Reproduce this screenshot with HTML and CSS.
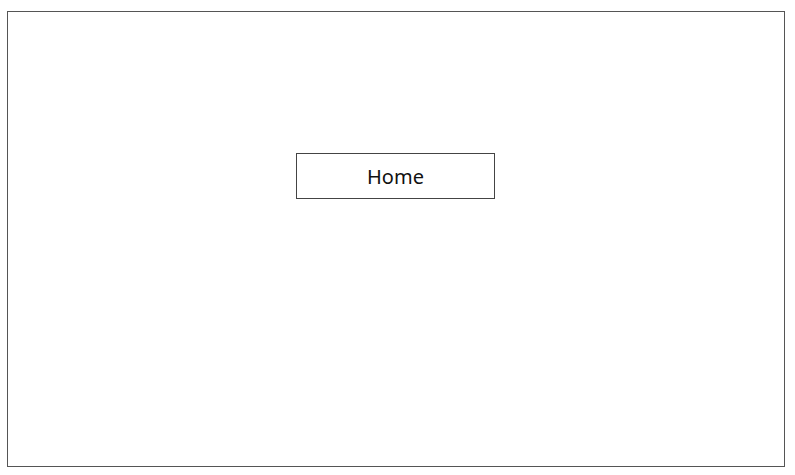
FILE: index.html
```html
<!DOCTYPE html>
<html lang="en">
<head>
  <meta charset="UTF-8" />
  <meta name="viewport" content="width=device-width, initial-scale=1.0" />
  <title>Home</title>
  <link rel="stylesheet" href="styles.css">
</head>
<body>
  <div class="screen">
    <button class="home-btn">Home</button>
  </div>
</body>
</html>
```

FILE: styles.css
```css
* {
  box-sizing: border-box;
}
body {
  margin: 0;
  padding: 11px 0 0 7px;
  font-family: "Noto Sans", "Open Sans", sans-serif;
  background: #fff;
}
.screen {
  width: 778px;
  height: 456px;
  border: 1px solid #555;
  display: flex;
  flex-direction: column;
  align-items: center;
  padding: 141px 1px 0 0;
}
.home-btn {
  width: 199px;
  height: 46px;
  border: 1px solid #444;
  background: #fff;
  font-family: inherit;
  font-size: 20px;
  color: #111;
  padding: 0;
  border-radius: 0;
}
```
